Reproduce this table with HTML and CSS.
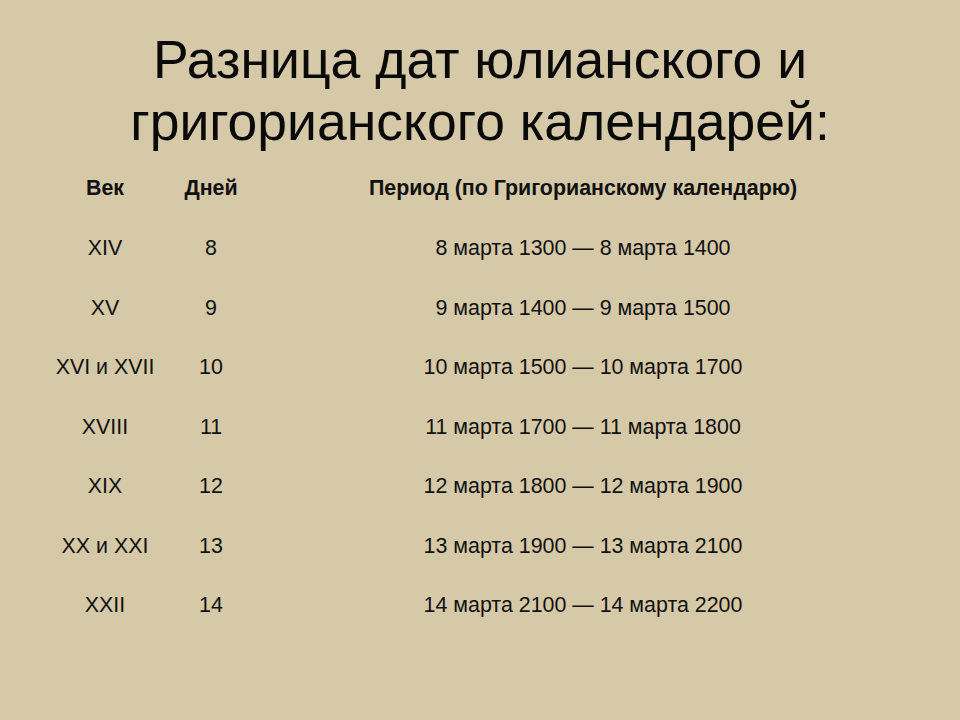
FILE: index.html
```html
<!DOCTYPE html>
<html lang="ru">
<head>
<meta charset="utf-8">
<link rel="stylesheet" href="styles.css">
</head>
<body>
<div class="slide">
  <h1 class="title">Разница дат юлианского и<br>григорианского календарей:</h1>
  <table class="tbl">
    <colgroup><col class="c1"><col class="c2"><col class="c3"></colgroup>
    <thead>
      <tr><th>Век</th><th>Дней</th><th>Период (по Григорианскому календарю)</th></tr>
    </thead>
    <tbody>
      <tr><td>XIV</td><td>8</td><td>8 марта 1300 — 8 марта 1400</td></tr>
      <tr><td>XV</td><td>9</td><td>9 марта 1400 — 9 марта 1500</td></tr>
      <tr><td>XVI и XVII</td><td>10</td><td>10 марта 1500 — 10 марта 1700</td></tr>
      <tr><td>XVIII</td><td>11</td><td>11 марта 1700 — 11 марта 1800</td></tr>
      <tr><td>XIX</td><td>12</td><td>12 марта 1800 — 12 марта 1900</td></tr>
      <tr><td>XX и XXI</td><td>13</td><td>13 марта 1900 — 13 марта 2100</td></tr>
      <tr><td>XXII</td><td>14</td><td>14 марта 2100 — 14 марта 2200</td></tr>
    </tbody>
  </table>
</div>
</body>
</html>
```
FILE: styles.css
```css
html, body { margin: 0; padding: 0; }
body { background: #d5c9a7; font-family: "Liberation Sans", Arial, sans-serif; color: #111; }
.slide { width: 960px; height: 720px; box-sizing: border-box; padding-top: 29px; }
.title { margin: 0; height: 124px; text-align: center; font-weight: normal; font-size: 53.5px; line-height: 62px; color: #0a0a0a; }
.tbl { margin: 4px 0 0 48px; border-collapse: collapse; table-layout: fixed; width: 858px; }
.c1 { width: 114px; } .c2 { width: 98px; } .c3 { width: 646px; }
.tbl th { font-weight: bold; font-size: 21.4px; height: 62px; text-align: center; padding: 0; vertical-align: middle; }
.tbl td { font-size: 21.4px; height: 59.5px; text-align: center; padding: 0; vertical-align: middle; }
```
